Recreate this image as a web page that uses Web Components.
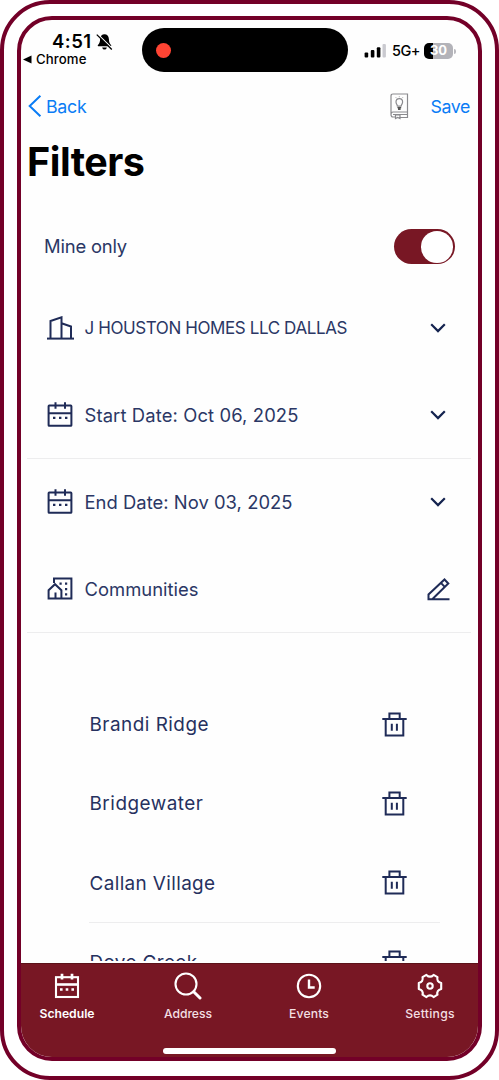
<!DOCTYPE html>
<html lang="en">
<head>
<meta charset="utf-8">
<title>Filters</title>
<style>
html,body{margin:0;height:100%;background:#fff;overflow:hidden}
body{font-family:Inter,"Liberation Sans",sans-serif}
</style>
</head>
<body>
<phone-frame>
  <status-bar></status-bar>
  <nav-header></nav-header>
  <page-title></page-title>
  <toggle-row></toggle-row>
  <filter-row icon="building" action="chevron" width="262.5" size="17">J HOUSTON HOMES LLC DALLAS</filter-row>
  <filter-row icon="calendar" action="chevron" width="214" line>Start Date: Oct 06, 2025</filter-row>
  <filter-row icon="calendar" action="chevron" width="208">End Date: Nov 03, 2025</filter-row>
  <filter-row icon="community" action="pencil" width="114" line>Communities</filter-row>
  <community-list>
    <community-item width="119.5">Brandi Ridge</community-item>
    <community-item width="114">Bridgewater</community-item>
    <community-item width="126" line>Callan Village</community-item>
    <community-item width="108">Dove Creek</community-item>
  </community-list>
  <tab-bar slot="footer"></tab-bar>
</phone-frame>
<script>
const icons = {
  building: '<svg width="27" height="24" viewBox="0 0 27 24" fill="none" stroke="#1f2b57" stroke-width="2"><path d="M0 22.6H27"/><path d="M3.5 22V5L14.5 1.3V22M14.5 7.2L24 10.5V22"/></svg>',
  calendar: '<svg width="26" height="25" viewBox="0 0 26 25" fill="none" stroke="#1f2b57" stroke-width="2"><rect x="1.6" y="3.6" width="22.8" height="20.2" rx=".6"/><path d="M1.6 11.3H24.4M8.500 .3V6.8M18 .3V6.8"/><path d="M6 15.900h2.4M12 15.900h2.4M18 15.900h2.4" stroke-width="2.3"/></svg>',
  community: '<svg width="26" height="23" viewBox="0 0 26 23" fill="none" stroke="#1f2b57" stroke-width="2"><path d="M7 6V1.4H24.4V21.6H1.6V13.2L8 7.2L14.4 13.2V21.6M8.5 21V15.5"/><path d="M12.5 6.7h2.2M18 6.7h2.2M18 12.2h2.2M18 17.3h2.2" stroke-width="2.3"/></svg>',
  chevron: '<svg width="16" height="10" viewBox="0 0 16 10" fill="none" stroke="#14234f" stroke-width="2.200"><path d="M1.2 1.3L8 8.1L14.8 1.3"/></svg>',
  pencil: '<svg width="23" height="24" viewBox="0 0 23 24" fill="none" stroke="#1f2b57" stroke-width="2"><path d="M22.5 22.2H1.500V17.5L17.500 2.500L21.300 6.500L5.5 22M13.9 5.900L17.700 9.900"/></svg>',
  trash: '<svg width="25" height="26" viewBox="0 0 25 26" fill="none" stroke="#1f2b57" stroke-width="2"><path d="M.3 8H24.7M3.7 8V24.5H21.3V8M7.4 8V2.6H17.7V8M9.8 12.7V19.7M14.9 12.7V19.7"/></svg>'
};

class BaseElement extends HTMLElement {
  constructor() {
    super();
    this.attachShadow({ mode: 'open' });
    this.shadowRoot.innerHTML = this.template();
  }
}

/* A line of text that tracks itself to a given width. */
customElements.define('tracked-text', class extends HTMLElement {
  constructor() {
    super();
    this.attachShadow({ mode: 'open' }).innerHTML =
      '<style>:host{display:block;white-space:nowrap;line-height:1.21}span{display:inline-block}</style><span><slot></slot></span>';
  }
  connectedCallback() {
    const span = this.shadowRoot.querySelector('span');
    const target = parseFloat(this.getAttribute('width'));
    const length = this.textContent.trim().length;
    const natural = span.getBoundingClientRect().width;
    if (target && natural) span.style.letterSpacing = ((target - natural) / length).toFixed(3) + 'px';
  }
});

customElements.define('phone-frame', class extends BaseElement {
  template() { return `<style>
    :host{display:block;box-sizing:border-box;width:499px;height:1080px;border:4px solid #730028;border-radius:50px;padding:12px 13px 15px;background:#fff}
    .screen{box-sizing:border-box;height:1045px;border:4px solid #730028;border-radius:35px;overflow:hidden;display:flex;flex-direction:column;background:#fefefe}
    main{height:941px;flex:none;overflow:hidden;margin-bottom:2px}
    </style><div class="screen"><main><slot></slot></main><slot name="footer"></slot></div>`; }
});

customElements.define('status-bar', class extends BaseElement {
  template() { return `<style>
    :host{display:grid;grid-template-columns:121px 206px 1fr;height:66px;align-items:start;color:#000}
    .left{padding:10px 0 0 2px}
    .time{display:flex;align-items:center;gap:4px;padding-left:29px;height:23px;font-size:18.5px;font-weight:600}
    .app{display:flex;align-items:center;gap:5px;font-size:13.2px;font-weight:500;height:13px}
    .app tracked-text{margin-left:-1px}
    .island{height:44px;margin-top:8px;border-radius:22px;background:#000;display:flex;align-items:center}
    .island i{width:15px;height:15px;margin-left:14px;border-radius:50%;background:#ff4433}
    .right{display:flex;align-items:center;padding:22px 0 0 16px;height:18px}
    .net{margin:0 4px 0 6px;font-size:14.5px;font-weight:500}
    .battery{width:29px;height:16px;border-radius:5px;background:linear-gradient(90deg,#000 9px,#b3b3b9 9px);color:#fff;font-size:13px;font-weight:700;display:flex;align-items:center;justify-content:center}
    .tip{width:2px;height:5px;margin-left:1px;border-radius:0 2px 2px 0;background:#b9b9be}
    </style>
    <div class="left">
      <div class="time"><tracked-text width="39.5">4:51</tracked-text>
        <svg width="17" height="18" viewBox="0 0 17 18"><path d="M8.5 1.3C6 1.3 4.2 3.2 4.1 6C4 9.6 3.3 10.4 1.8 12.2Q1.4 13.3 2.4 13.3H14.6Q15.6 13.3 15.2 12.2C13.7 10.4 13 9.6 12.9 6C12.8 3.2 11 1.3 8.5 1.3Z"/><path d="M6.1 14.4H10.9Q10.3 16.6 8.5 16.6T6.1 14.4Z"/><path d="M2 1.5L16.5 15.6" stroke="#fefefe" stroke-width="1.3"/><path d="M.8 1.6L15.8 16.5" stroke="#000" stroke-width="1.3"/></svg></div>
      <div class="app"><svg width="9" height="9" viewBox="0 0 9 9"><path d="M0 4.5L8.5 .5V8.5Z"/></svg><tracked-text width="50.5">Chrome</tracked-text></div>
    </div>
    <div class="island"><i></i></div>
    <div class="right">
      <svg width="22" height="14" viewBox="0 0 22 14"><rect x=".6" y="8.5" width="3.6" height="5" rx="1"/><rect x="6.8" y="6" width="3.6" height="7.5" rx="1"/><rect x="12.8" y="3.2" width="3.6" height="10.3" rx="1"/><rect x="18.5" y="0" width="3.4" height="13.5" rx="1" fill="#cacad0"/></svg>
      <tracked-text class="net" width="28">5G+</tracked-text>
      <div class="battery"><tracked-text width="17">30</tracked-text></div><i class="tip"></i>
    </div>`; }
});

customElements.define('nav-header', class extends BaseElement {
  template() { return `<style>
    :host{display:flex;align-items:center;height:40px;padding:0 8px 0 7px;color:#0a7cf5;font-size:17.8px}
    .back{display:flex;align-items:center;gap:4px;flex:1}
    .book{margin-right:22px}
    tracked-text{padding-top:1px}
    </style>
    <div class="back"><svg width="14" height="22" viewBox="0 0 14 22" fill="none" stroke="#0a7cf5" stroke-width="2"><path d="M12.4 .8L1.7 11L12.4 21.2"/></svg><tracked-text width="40.5">Back</tracked-text></div>
    <svg class="book" width="19" height="27" viewBox="0 0 19 27" fill="none" stroke="#8a8a8e" stroke-width="1.2"><path d="M1 21V3Q1 1 3 1H17.5V19H3Q1 19 1 21.500T3 24H5M10 24.500H17.500V19M3 21.500H17"/><path d="M7.300 13C7.300 11.500 6 11 6 8.900A3.300 3.300 0 0 1 12.600 8.900C12.600 11 11.200 11.500 11.200 13Z"/><path d="M7.400 14.500h3.800M8 16.200h2.600" stroke="#555" stroke-width="1.700"/><path d="M5.500 22V25.500L7.700 24.500L10 25.500V22Z"/><path d="M9.300 3.200V4.300M5.700 4.200L6.500 5.200M13 4.200L12.100 5.200" stroke-width=".7"/></svg>
    <tracked-text width="39.500">Save</tracked-text>`; }
});

customElements.define('page-title', class extends BaseElement {
  template() { return `<style>
    :host{display:block;box-sizing:border-box;height:83px;padding:12.500px 0 0 6px}
    h1{margin:0;font-size:39.500px;font-weight:700;color:#000}
    </style><h1><tracked-text width="117.500">Filters</tracked-text></h1>`; }
});

customElements.define('toggle-row', class extends BaseElement {
  template() { return `<style>
    :host{display:flex;align-items:center;justify-content:space-between;box-sizing:border-box;height:76px;padding:0 23.500px 1px 23px;font-size:18.400px;color:#2b3765}
    .switch{display:flex;justify-content:flex-end;box-sizing:border-box;width:60.500px;height:35px;padding:1.500px;border-radius:18px;background:#781724}
    .switch i{width:32.500px;height:32px;border-radius:50%;background:#fff}
    </style><tracked-text width="83">Mine only</tracked-text><div class="switch"><i></i></div>`; }
});

customElements.define('filter-row', class extends HTMLElement {
  constructor() {
    super();
    this.attachShadow({ mode: 'open' });
  }
  connectedCallback() {
    const size = this.getAttribute('size') || '18.4';
    this.shadowRoot.innerHTML = `<style>
      :host{display:grid;grid-template-columns:26px 1fr 24px;column-gap:11.5px;align-items:center;box-sizing:border-box;height:87px;margin:0 7px 0 6px;padding:0 21px 0 20px;border-bottom:1px solid transparent;color:#2b3765;font-size:${size}px}
      :host([line]){border-color:#ededee}
      .icon,.action{display:flex;justify-content:center}
      .icon{padding-bottom:2px}
      :host([icon="building"]) .icon,:host([icon="community"]) .icon{padding-bottom:1px}
      .icon svg{flex:none}
      </style><div class="icon">${icons[this.getAttribute('icon')]}</div>
      <tracked-text width="${this.getAttribute('width')}">${this.textContent}</tracked-text>
      <div class="action">${icons[this.getAttribute('action')]}</div>`;
  }
});

customElements.define('community-list', class extends BaseElement {
  template() { return `<style>:host{display:block;padding:52px 38px 0 68px}</style><slot></slot>`; }
});

customElements.define('community-item', class extends HTMLElement {
  constructor() {
    super();
    this.attachShadow({ mode: 'open' });
  }
  connectedCallback() {
    this.shadowRoot.innerHTML = `<style>
      :host{display:flex;align-items:center;justify-content:space-between;box-sizing:border-box;height:79.400px;padding:0 33px 0 .5px;border-bottom:1px solid transparent;color:#26315f;font-size:18.900px}
      :host([line]){border-color:#ededee}
      tracked-text{padding-top:2.400px}
      svg{display:block;margin-bottom:1px}
      </style><tracked-text width="${this.getAttribute('width')}">${this.textContent}</tracked-text>${icons.trash}`;
  }
});

customElements.define('tab-item', class extends BaseElement {
  template() { return `<style>
    :host{display:flex;flex-direction:column;align-items:center;width:92px;color:#f3dfe2;font-size:12.200px;font-weight:500}
    :host([active]){color:#fff;font-weight:600}
    .icon{height:30px;display:flex;align-items:center;margin-bottom:6px}
    </style><div class="icon"><slot name="icon"></slot></div><slot></slot>`; }
});

customElements.define('tab-bar', class extends BaseElement {
  template() { return `<style>
    :host{display:flex;flex-direction:column;align-items:center;justify-content:space-between;box-sizing:border-box;height:94px;padding-bottom:3px;background:#781724;box-shadow:inset 0 1px #5c1219}
    nav{display:flex;justify-content:space-between;box-sizing:border-box;width:100%;padding:8px 2px 0 0}
    .home{width:173px;height:6.500px;margin-right:1px;border-radius:4px;background:#fff}
    svg{fill:none;stroke:#fff}
    </style>
    <nav>
      <tab-item active><svg slot="icon" width="26" height="26" viewBox="0 0 26 26" stroke-width="2.100"><rect x="2" y="4.200" width="22" height="19.800"/><path d="M2 11.500H24" stroke-width="2.600"/><path d="M8 .8V6.500M18 .8V6.500M6 16.500h2.600M11.700 16.500h2.600M17.400 16.500h2.600" stroke-width="2.700"/></svg><tracked-text width="55">Schedule</tracked-text></tab-item>
      <tab-item><svg slot="icon" width="28" height="28" viewBox="0 0 28 28" stroke-width="2.100"><circle cx="12" cy="12" r="10.500"/><path d="M19.700 19.700L26 26" stroke-width="3" stroke-linecap="round"/></svg><tracked-text width="48">Address</tracked-text></tab-item>
      <tab-item><svg slot="icon" width="26" height="26" viewBox="0 0 26 26" stroke-width="2.100"><circle cx="13" cy="13" r="11.200"/><path d="M13 6.500V14.500H18.700" stroke-width="2.400"/></svg><tracked-text width="40">Events</tracked-text></tab-item>
      <tab-item><svg slot="icon" width="26" height="26" viewBox="0 0 26 26" stroke-width="2.100" stroke-linejoin="round"><path d="M9.400 1.900Q13 5.500 16.600 1.900L20.500 4.200Q19.300 8.700 24.200 10V16Q19.300 17.300 20.500 21.700L16.600 24.100Q13 20.500 9.400 24.100L5.500 21.700Q6.700 17.300 1.800 16V10Q6.700 8.700 5.500 4.200Z"/><circle cx="13" cy="13" r="2.700"/></svg><tracked-text width="49.500">Settings</tracked-text></tab-item>
    </nav>
    <div class="home"></div>`; }
});
</script>
</body>
</html>
